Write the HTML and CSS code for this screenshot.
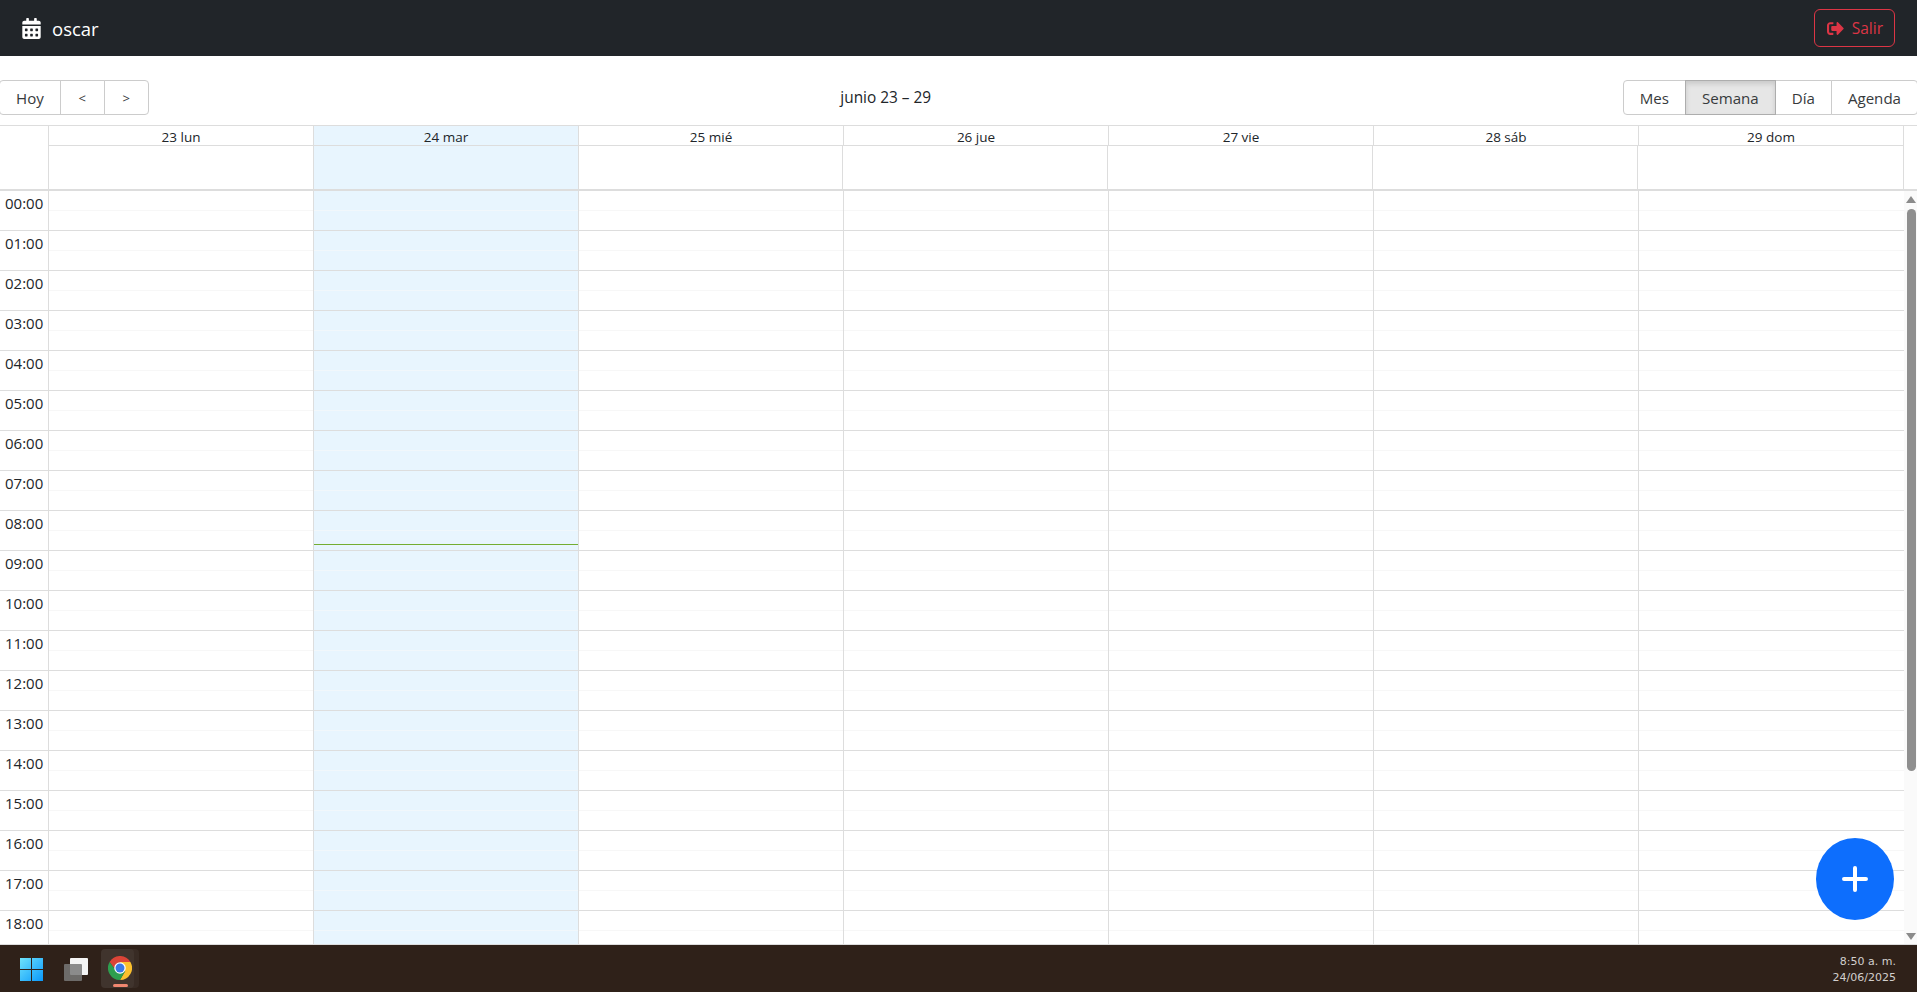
FILE: index.html
```html
<!DOCTYPE html>
<html lang="es">
<head>
    <meta charset="UTF-8">
    <title>Calendario</title>
    <link rel="stylesheet" href="styles.css">
</head>
<body>
    <nav class="navbar">
        <a class="brand" href="#">
            <svg class="brand-icon" viewBox="0 0 448 512"><path fill="currentColor" d="M0 464c0 26.5 21.5 48 48 48h352c26.5 0 48-21.5 48-48V192H0v272zm320-196c0-6.6 5.4-12 12-12h40c6.6 0 12 5.4 12 12v40c0 6.6-5.4 12-12 12h-40c-6.6 0-12-5.4-12-12v-40zm0 128c0-6.6 5.4-12 12-12h40c6.6 0 12 5.4 12 12v40c0 6.6-5.4 12-12 12h-40c-6.6 0-12-5.4-12-12v-40zM192 268c0-6.6 5.4-12 12-12h40c6.6 0 12 5.4 12 12v40c0 6.6-5.4 12-12 12h-40c-6.6 0-12-5.4-12-12v-40zm0 128c0-6.6 5.4-12 12-12h40c6.6 0 12 5.4 12 12v40c0 6.6-5.4 12-12 12h-40c-6.6 0-12-5.4-12-12v-40zM64 268c0-6.6 5.4-12 12-12h40c6.6 0 12 5.4 12 12v40c0 6.6-5.4 12-12 12H76c-6.6 0-12-5.4-12-12v-40zm0 128c0-6.6 5.4-12 12-12h40c6.6 0 12 5.4 12 12v40c0 6.6-5.4 12-12 12H76c-6.6 0-12-5.4-12-12v-40zM400 64h-48V16c0-8.8-7.2-16-16-16h-32c-8.8 0-16 7.2-16 16v48H160V16c0-8.8-7.2-16-16-16h-32c-8.8 0-16 7.2-16 16v48H48C21.5 64 0 85.5 0 112v48h448v-48c0-26.5-21.5-48-48-48z"/></svg>
            <span>oscar</span>
        </a>
        <button class="logout" type="button">
            <svg class="logout-icon" viewBox="0 0 512 512"><path fill="currentColor" d="M497 273L329 441c-15 15-41 4.5-41-17v-96H152c-13.3 0-24-10.7-24-24v-96c0-13.3 10.7-24 24-24h136V88c0-21.4 25.9-32 41-17l168 168c9.3 9.4 9.3 24.6 0 34zM192 436v-40c0-6.6-5.4-12-12-12H96c-17.7 0-32-14.3-32-32V160c0-17.7 14.3-32 32-32h84c6.6 0 12-5.4 12-12V76c0-6.6-5.4-12-12-12H96c-53 0-96 43-96 96v192c0 53 43 96 96 96h84c6.6 0 12-5.4 12-12z"/></svg>
            Salir
        </button>
    </nav>

    <main class="calendar">
        <div class="toolbar">
            <div class="btn-group">
                <button type="button">Hoy</button>
                <button type="button" class="arrow">&lt;</button>
                <button type="button" class="arrow">&gt;</button>
            </div>
            <span class="toolbar-label">junio 23 – 29</span>
            <div class="btn-group">
                <button type="button">Mes</button>
                <button type="button" class="active">Semana</button>
                <button type="button">Día</button>
                <button type="button">Agenda</button>
            </div>
        </div>

        <!-- cabecera de la semana -->
        <div class="week-head">
            <div class="head-row">
                <div class="corner"></div>
                <div class="head-cell">23 lun</div>
                <div class="head-cell today">24 mar</div>
                <div class="head-cell">25 mié</div>
                <div class="head-cell">26 jue</div>
                <div class="head-cell">27 vie</div>
                <div class="head-cell">28 sáb</div>
                <div class="head-cell">29 dom</div>
            </div>
            <div class="allday-row">
                <div class="corner"></div>
                <div class="allday-cell"></div>
                <div class="allday-cell today"></div>
                <div class="allday-cell"></div>
                <div class="allday-cell"></div>
                <div class="allday-cell"></div>
                <div class="allday-cell"></div>
                <div class="allday-cell"></div>
            </div>
        </div>

        <div class="time-view">
            <div class="time-content">
                <div class="gutter">
                    <div class="time-slot">00:00</div>
                    <div class="time-slot">01:00</div>
                    <div class="time-slot">02:00</div>
                    <div class="time-slot">03:00</div>
                    <div class="time-slot">04:00</div>
                    <div class="time-slot">05:00</div>
                    <div class="time-slot">06:00</div>
                    <div class="time-slot">07:00</div>
                    <div class="time-slot">08:00</div>
                    <div class="time-slot">09:00</div>
                    <div class="time-slot">10:00</div>
                    <div class="time-slot">11:00</div>
                    <div class="time-slot">12:00</div>
                    <div class="time-slot">13:00</div>
                    <div class="time-slot">14:00</div>
                    <div class="time-slot">15:00</div>
                    <div class="time-slot">16:00</div>
                    <div class="time-slot">17:00</div>
                    <div class="time-slot">18:00</div>
                </div>
                <div class="day-col"></div>
                <div class="day-col today">
                    <div class="now-line"></div>
                </div>
                <div class="day-col"></div>
                <div class="day-col"></div>
                <div class="day-col"></div>
                <div class="day-col"></div>
                <div class="day-col"></div>
            </div>
            <div class="scrollbar">
                <span class="scroll-up"></span>
                <span class="scroll-thumb"></span>
                <span class="scroll-down"></span>
            </div>
        </div>

        <button class="fab" type="button" aria-label="Nuevo">
            <svg viewBox="0 0 26 26"><path d="M13 2v22M2 13h22" fill="none" stroke="currentColor" stroke-width="4" stroke-linecap="round"/></svg>
        </button>
    </main>

    <footer class="taskbar">
        <div class="task-icons">
            <svg class="win-logo" viewBox="0 0 23 23">
                <defs>
                    <linearGradient id="winBlue" gradientUnits="userSpaceOnUse" x1="0" y1="0" x2="23" y2="23">
                        <stop offset="0" stop-color="#6fe3fb"/>
                        <stop offset="1" stop-color="#0a98fb"/>
                    </linearGradient>
                </defs>
                <path fill="url(#winBlue)" d="M0 0h11v11H0zM12 0h11v11H12zM0 12h11v11H0zM12 12h11v11H12z"/>
            </svg>
            <div class="task-view">
                <span class="view-back"></span>
                <span class="view-front"></span>
            </div>
            <div class="task-app">
                <svg class="chrome" viewBox="0 0 48 48">
                    <path fill="#db4437" d="M3.200 12A24 24 0 0 1 44.800 12H24L12 24z"/>
                    <path fill="#fbc02d" d="M44.800 12A24 24 0 0 1 24 48L34.400 30 24 12z"/>
                    <path fill="#2e9e4f" d="M3.200 12A24 24 0 0 0 24 48L34.400 30 12 24z"/>
                    <circle cx="24" cy="24" r="11.500" fill="#fff"/>
                    <circle cx="24" cy="24" r="9" fill="#3b78e7"/>
                </svg>
                <span class="app-marker"></span>
            </div>
        </div>
        <div class="clock">
            <div>8:50 a. m.</div>
            <div>24/06/2025</div>
        </div>
    </footer>
</body>
</html>
```

FILE: styles.css
```css
* {
    box-sizing: border-box;
}

html, body {
    height: 100%;
}

body {
    margin: 0;
    display: flex;
    flex-direction: column;
    overflow: hidden;
    font-family: "Open Sans", "Noto Sans", sans-serif;
    font-size: 15px;
    color: #212529;
    background-color: #fff;
}

/* barra superior */
.navbar {
    flex: 0 0 56px;
    display: flex;
    align-items: center;
    justify-content: space-between;
    padding: 0 22px 0 22px;
    background-color: #212529;
}

.brand {
    display: flex;
    align-items: center;
    gap: 11px;
    color: #fff;
    font-size: 18.5px;
    text-decoration: none;
}

.brand-icon {
    width: 19px;
    height: 21px;
}

.logout {
    display: flex;
    align-items: center;
    gap: 8px;
    height: 38px;
    padding: 0 11px 0 12px;
    border: 1px solid #dc3545;
    border-radius: 6px;
    background: transparent;
    color: #dc3545;
    font-family: inherit;
    font-size: 15.5px;
}

.logout-icon {
    width: 17px;
    height: 17px;
}

/* calendario */
.calendar {
    position: relative;
    flex: 1;
    min-height: 0;
    display: flex;
    flex-direction: column;
    border-bottom: 1px solid #ddd;
}

.toolbar {
    flex: 0 0 69px;
    display: flex;
    align-items: flex-start;
    justify-content: space-between;
    padding-top: 24px;
    margin: 0 -1px;
}

.toolbar-label {
    font-size: 15.4px;
    line-height: 35px;
}

.btn-group {
    display: flex;
}

.btn-group button {
    height: 35px;
    padding: 0 16px;
    margin-left: -1px;
    border: 1px solid #ccc;
    background-color: #fff;
    color: #373a3c;
    font-family: inherit;
    font-size: 15.1px;
}

.btn-group button:first-child {
    margin-left: 0;
    border-radius: 4px 0 0 4px;
}

.btn-group button:last-child {
    border-radius: 0 4px 4px 0;
}

.btn-group .arrow {
    width: 45px;
    padding: 0;
    font-size: 13px;
}

.btn-group .active {
    background-color: #e6e6e6;
    border-color: #adadad;
    box-shadow: inset 0 3px 5px rgba(0, 0, 0, 0.125);
    position: relative;
}

.week-head {
    flex: 0 0 66px;
    border-top: 1px solid #ddd;
    border-bottom: 2px solid #ddd;
    padding-right: 13px;
}

.head-row {
    display: flex;
    height: 20px;
}

.allday-row {
    display: flex;
    height: 43px;
}

.corner {
    flex: 0 0 49px;
    border-right: 1px solid #ddd;
}

.head-cell {
    flex: 0 0 265px;
    border-right: 1px solid #ddd;
    border-bottom: 1px solid #ddd;
    text-align: center;
    font-size: 13.5px;
    line-height: 22px;
}

.allday-cell {
    flex: 0 0 264.8px;
    border-right: 1px solid #ddd;
}

.allday-cell:last-child {
    flex: 1;
}

.today {
    background-color: #e8f5fe;
}

.time-view {
    flex: 1;
    min-height: 0;
    display: flex;
}

.time-content {
    flex: 1;
    min-height: 0;
    display: flex;
    overflow: hidden;
}

.gutter {
    flex: 0 0 49px;
    border-right: 1px solid #ddd;
}

.time-slot {
    height: 40px;
    padding: 0 5px;
    border-bottom: 1px solid #ddd;
    font-size: 15px;
    line-height: 24px;
    text-align: right;
    white-space: nowrap;
}

.day-col {
    position: relative;
    flex: 0 0 265px;
    border-right: 1px solid #ddd;
    background-image: repeating-linear-gradient(
        to bottom,
        transparent 0 19px,
        #f7f7f7 19px 20px,
        transparent 20px 39px,
        #ddd 39px 40px
    );
}

.day-col:last-child {
    border-right: none;
}

.day-col.today {
    background-image: repeating-linear-gradient(
        to bottom,
        transparent 0 19px,
        #f1f7fb 19px 20px,
        transparent 20px 39px,
        #ddd 39px 40px
    );
}

.now-line {
    position: absolute;
    top: 353px;
    left: 0;
    right: 0;
    height: 1px;
    background-color: #74ad31;
}

/* barra de desplazamiento */
.scrollbar {
    flex: 0 0 13px;
    display: flex;
    flex-direction: column;
    align-items: center;
    padding: 5px 1px 4px 2px;
    background-color: #fafafa;
}

.scroll-up,
.scroll-down {
    width: 0;
    height: 0;
    border-left: 5px solid transparent;
    border-right: 5px solid transparent;
}

.scroll-up {
    border-bottom: 7px solid #8b8b8b;
}

.scroll-down {
    margin-top: auto;
    border-top: 7px solid #8b8b8b;
}

.scroll-thumb {
    width: 9px;
    height: 562px;
    margin-top: 6px;
    border-radius: 5px;
    background-color: #8f8f8f;
}

.fab {
    position: absolute;
    right: 23px;
    bottom: 24px;
    width: 78px;
    height: 82px;
    padding: 0;
    display: flex;
    align-items: center;
    justify-content: center;
    border: none;
    border-radius: 50%;
    background-color: #0d6efd;
    color: #fff;
}

.fab svg {
    width: 26px;
    height: 26px;
}

/* barra de tareas */
.taskbar {
    flex: 0 0 47px;
    display: flex;
    align-items: center;
    justify-content: space-between;
    padding: 0 21px 0 20px;
    background-color: #2f2119;
}

.task-icons {
    display: flex;
    align-items: center;
}

.win-logo {
    width: 23px;
    height: 23px;
    margin-top: 1px;
}

.task-view {
    position: relative;
    width: 24px;
    height: 23px;
    margin: 1px 0 0 21px;
}

.view-back,
.view-front {
    position: absolute;
    width: 18px;
    height: 17px;
    border-radius: 1px;
}

.view-front {
    top: 0;
    right: 0;
    background-color: #f4f4f4;
}

.view-back {
    left: 0;
    bottom: 0;
    z-index: 1;
    background-color: rgba(120, 120, 120, 0.85);
}

.task-app {
    position: relative;
    display: flex;
    align-items: center;
    justify-content: center;
    width: 33px;
    height: 39px;
    padding: 0 0 1px 5px;
    margin-left: 13px;
    border-radius: 4px;
    background-color: #40342d;
    box-shadow: 5px 0 0 #382b24;
}

.chrome {
    width: 24px;
    height: 24px;
}

.app-marker {
    position: absolute;
    left: 12px;
    bottom: 1px;
    width: 15px;
    height: 3px;
    border-radius: 2px;
    background-color: #f08770;
}

.clock {
    padding-top: 2px;
    font-family: "DejaVu Sans", sans-serif;
    font-size: 11px;
    line-height: 16px;
    text-align: right;
    color: #d2cfcd;
}
```
